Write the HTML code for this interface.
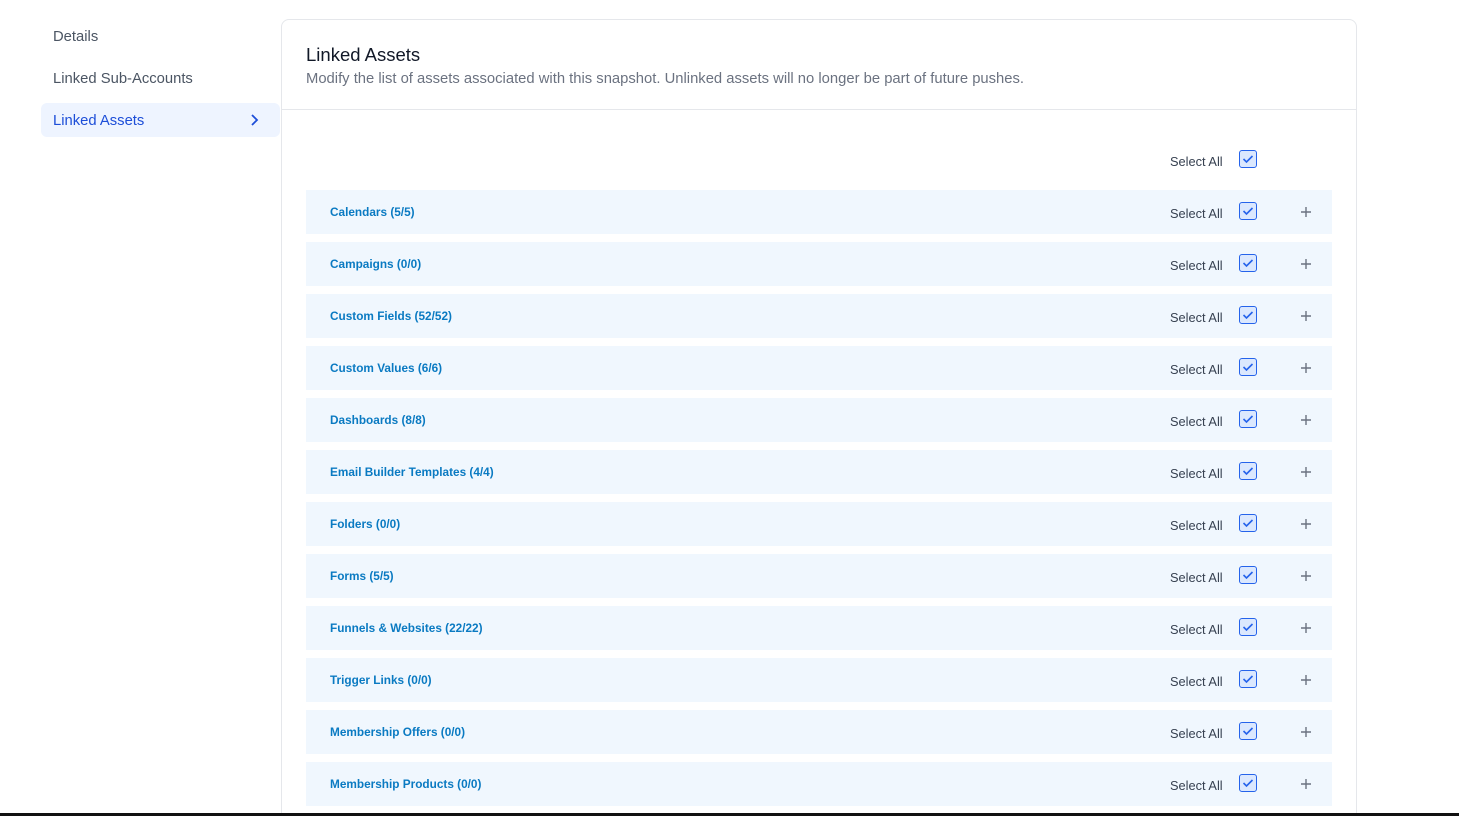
<!DOCTYPE html>
<html style="overflow:hidden;height:816px"><head><style>
body{margin:0;width:1459px;height:816px;overflow:hidden;background:#fff;font-family:"Liberation Sans",sans-serif;position:relative}
.nav{position:absolute;left:53px;font-size:14.8px;color:#4b5563}
.act{position:absolute;left:41px;top:103px;width:239px;height:34px;background:#eef4ff;border-radius:6px}
.card{position:absolute;left:281px;top:19px;width:1074px;height:810px;border:1px solid #e5e7eb;border-radius:8px;background:#fff}
.hd{position:absolute;left:0;top:0;right:0;height:89px;border-bottom:1px solid #e5e7eb}
.row{position:absolute;left:24px;width:1026px;height:44px;background:#f0f7fe}
.lbl{position:absolute;left:24px;top:15px;font-size:11.8px;font-weight:bold;color:#0a7ac2}
.sa{position:absolute;left:864px;font-size:12.8px;color:#374151}
.cb{position:absolute;width:16px;height:16px;border:1.5px solid #2563eb;border-radius:3px;background:#dbe8fe}
.pl{position:absolute;left:994px;top:16px;width:12px;height:12px}
</style></head><body>
<div class="nav" style="top:29px">Details</div>
<div class="nav" style="top:71px">Linked Sub-Accounts</div>
<div class="act"></div>
<div class="nav" style="top:113px;color:#1d4ed8">Linked Assets</div>
<svg style="position:absolute;left:249px;top:113px" width="12" height="14"><path d="M3 2l5 5-5 5" stroke="#1d4ed8" stroke-width="1.8" fill="none"/></svg>
<div class="card">
<div class="hd">
<div style="position:absolute;left:24px;top:24px;font-size:18.5px;color:#111827">Linked Assets</div>
<div style="position:absolute;left:24px;top:51px;font-size:14.8px;color:#6b7280">Modify the list of assets associated with this snapshot. Unlinked assets will no longer be part of future pushes.</div>
</div>
<div class="sa" style="left:888px;top:134px">Select All</div>
<div class="cb" style="left:957px;top:130px"><svg width="16" height="16"><path d="M3.5 8l3 3 6-6" stroke="#2563eb" stroke-width="1.6" fill="none"/></svg></div>
<div id="rows"></div>
</div>
<div style="position:absolute;left:0;top:813px;width:1459px;height:3px;background:#111"></div>
<script>
var n=["Calendars (5/5)","Campaigns (0/0)","Custom Fields (52/52)","Custom Values (6/6)","Dashboards (8/8)","Email Builder Templates (4/4)","Folders (0/0)","Forms (5/5)","Funnels & Websites (22/22)","Trigger Links (0/0)","Membership Offers (0/0)","Membership Products (0/0)"];
var h="";n.forEach(function(t,i){h+='<div class="row" style="top:'+(170+i*52)+'px"><div class="lbl">'+t.replace("&","&amp;")+'</div><div class="sa" style="top:16px">Select All</div><div class="cb" style="left:933px;top:12px"><svg width="16" height="16"><path d="M3.5 8l3 3 6-6" stroke="#2563eb" stroke-width="1.6" fill="none"/></svg></div><svg class="pl"><path d="M6 1v10M1 6h10" stroke="#6b7280" stroke-width="1.4"/></svg></div>'});
document.getElementById("rows").innerHTML=h;
</script>
</body></html>
